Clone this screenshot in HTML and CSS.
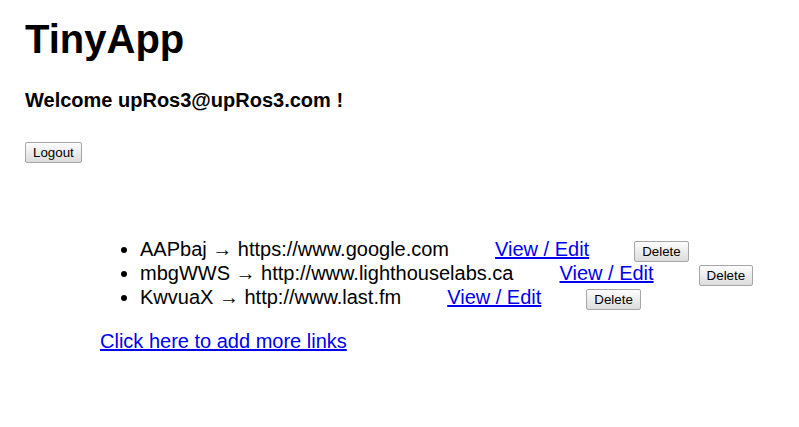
FILE: index.html
```html
<!DOCTYPE html>
<html>
<head>
<meta charset="utf-8">
<title>TinyApp</title>
<link rel="stylesheet" href="styles.css">
</head>
<body>
<header class="top">
  <h1 class="title">TinyApp</h1>
  <h4 class="welcome">Welcome upRos3@upRos3.com !</h4>
  <form class="logout-form"><button class="btn" type="button">Logout</button></form>
</header>
<main class="links">
  <ul class="url-list">
    <li class="url-item"><span class="pair">AAPbaj → https://www.google.com</span><a class="edit" href="#">View / Edit</a><form class="del-form"><button class="btn" type="button">Delete</button></form></li>
    <li class="url-item"><span class="pair">mbgWWS → http://www.lighthouselabs.ca</span><a class="edit" href="#">View / Edit</a><form class="del-form"><button class="btn" type="button">Delete</button></form></li>
    <li class="url-item"><span class="pair">KwvuaX → http://www.last.fm</span><a class="edit" href="#">View / Edit</a><form class="del-form"><button class="btn" type="button">Delete</button></form></li>
  </ul>
  <a class="add" href="#">Click here to add more links</a>
</main>
</body>
</html>
```

FILE: styles.css
```css
html, body {
  background: #ffffff;
}
body {
  margin: 0;
  padding: 0 25px;
  font-family: "Liberation Sans", Arial, sans-serif;
  font-size: 20px;
  color: #000;
}
.title {
  font-size: 40px;
  font-weight: bold;
  margin: 17px 0 27px;
}
.welcome {
  font-size: 20px;
  font-weight: bold;
  margin: 27px 0 27px;
}
.logout-form {
  margin: 0;
}
.btn {
  font-family: "Liberation Sans", Arial, sans-serif;
  font-size: 13.333px;
  color: #000;
  padding: 2px 7px;
  margin: 0;
  border: 1px solid #a6a6a6;
  border-radius: 2px;
  background: linear-gradient(#fdfdfd, #dcdcdc);
}
.links {
  margin-left: 75px;
  padding-top: 75px;
}
.url-list {
  margin: 0 0 20px;
  padding-left: 40px;
}
.edit {
  margin-left: 46px;
  color: #0000ee;
  text-decoration: underline;
}
.del-form {
  display: inline;
  margin-left: 45px;
}
.add {
  color: #0000ee;
  text-decoration: underline;
}
```
